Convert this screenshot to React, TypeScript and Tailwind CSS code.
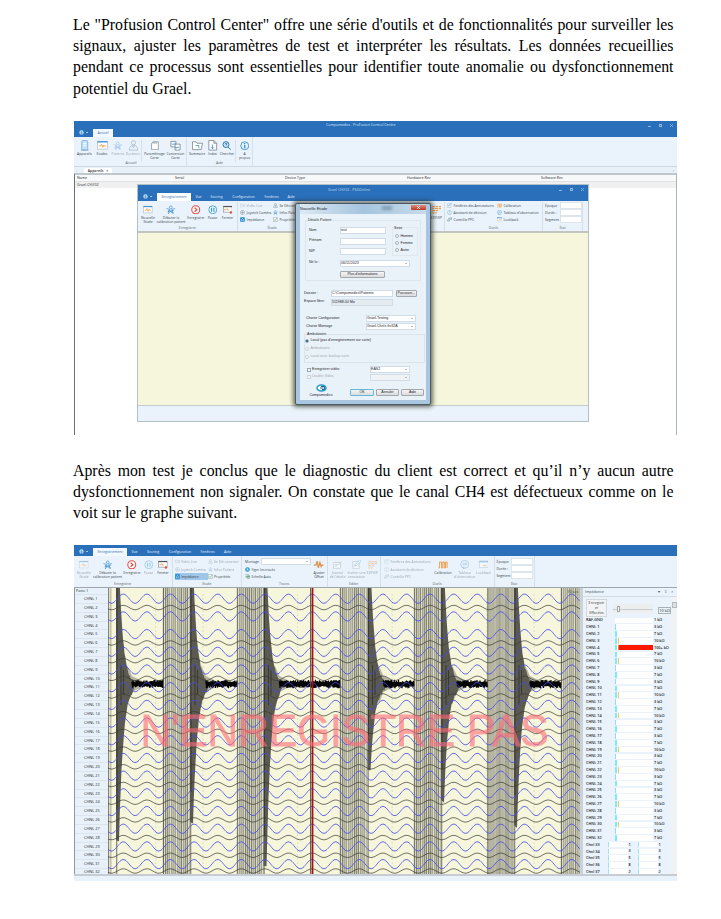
import React from "react";

type IconName =
  | "server" | "wave" | "people" | "person" | "card" | "swap" | "folder" | "page" | "search"
  | "info" | "record" | "pause" | "close" | "camera" | "joystick" | "imped" | "prop" | "figer"
  | "scale" | "offset" | "note" | "journal" | "edf" | "help" | "tool" | "calib" | "table" | "look";

const B = "#4793d1";
const O = "#f0a050";
const G = "#7d8790";

const glyphs: Record<IconName, React.ReactNode> = {
  server: <g><rect x="6" y="1" width="13" height="21" rx="3" fill="#c5e2f7" stroke="#7fb3dc" strokeWidth="2" /><path d="M9 8h7M9 12h7" stroke="#fff" strokeWidth="2" /><path d="M4 22h17" stroke="#7fa9c9" strokeWidth="2" /></g>,
  wave: <g><rect x="1" y="3" width="22" height="17" fill="#fff" stroke="#a9b9c6" strokeWidth="1.5" /><path d="M1 4h22" stroke={B} strokeWidth="3" /><path d="M4 13h4l2-4 3 7 2-5 1 2h4" fill="none" stroke={O} strokeWidth="2" /></g>,
  people: <g fill="none" stroke={B} strokeWidth="1.8"><circle cx="12" cy="6" r="3.5" /><path d="M1 9l8 2-3 11 6-6 6 6-3-11 8-2M4 17l16-4M5 13l14 6" /></g>,
  person: <g fill="none" stroke="#5f7d95" strokeWidth="1.8"><circle cx="12" cy="6" r="4.5" /><path d="M3 22c0-8 4-10 9-10s9 2 9 10zM9 12l3 5 3-5" /></g>,
  card: <g fill="#fff" stroke={G} strokeWidth="1.8"><path d="M4 6l4-4h13v20H4zM8 2v5M12 2v5M16 2v5" /></g>,
  swap: <g fill="#fff" stroke={G} strokeWidth="1.8"><path d="M2 3h11v12H2z" /><path d="M11 9h11v13H11z" /><path d="M4 9h9l-3-3M20 16h-9l3 3" fill="none" stroke={B} /></g>,
  folder: <g fill="#fff" stroke={G} strokeWidth="1.8"><path d="M1 21V4h8l2 3h12l-3 14z" /><path d="M8 12h7v6" fill="none" stroke={B} /></g>,
  page: <g fill="#fff" stroke={G} strokeWidth="1.8"><path d="M4 1h11l6 6v15H4zM15 1v6h6" /><path d="M12 10v9M9 16l3 3 3-3" stroke={B} /></g>,
  search: <g fill="#c9e7fb" stroke="#276eaa" strokeWidth="2.3"><circle cx="10" cy="9" r="7.5" /><path d="M15 15l7 7" /><path d="M8 8q2-5 4-1l-2 4" fill="none" /></g>,
  info: <g fill="none" stroke="#2583c9" strokeWidth="2"><circle cx="12" cy="12" r="10" /><path d="M12 10v8M12 5v3" strokeWidth="3" /></g>,
  record: <g fill="#fff" stroke="#e04a40" strokeWidth="2.6"><circle cx="12" cy="12" r="10" /><path d="M9 7l6 5-6 5" fill="none" strokeWidth="3" /></g>,
  pause: <g fill="#eef8ff" stroke="#3f9bd8" strokeWidth="2.2"><circle cx="12" cy="12" r="10" /><path d="M9 7v10M15 7v10" strokeWidth="3" /></g>,
  close: <g><rect x="1" y="3" width="22" height="15" fill="#fff" stroke={G} strokeWidth="1.5" /><path d="M1 4h22" stroke="#555" strokeWidth="3" /><path d="M3 12h5l2-3 3 5 2-3" fill="none" stroke={O} strokeWidth="2" /><circle cx="20" cy="19" r="3" fill="#e24d42" /></g>,
  camera: <g fill="none" stroke={G} strokeWidth="2"><path d="M1 6h15v12H1zM16 11l7-4v11l-7-4" /></g>,
  joystick: <g fill="none" stroke="#667a88" strokeWidth="2"><circle cx="12" cy="12" r="10" /><path d="M12 5v14M5 12h14" /></g>,
  imped: <g><rect x="1" y="1" width="22" height="22" rx="3" fill="#1787cf" /><path d="M6 18h4c-5-6-2-11 2-11s7 5 2 11h4" fill="none" stroke="#fff" strokeWidth="2.5" /></g>,
  prop: <g fill="#fff" stroke={G} strokeWidth="2"><path d="M2 2h19v20H2z" /><path d="M6 12l4 5 8-11" fill="none" stroke="#39a06b" strokeWidth="3" /></g>,
  figer: <g><circle cx="12" cy="12" r="11" fill="#2b93d1" /><path d="M6 13l12-3M12 5v13M7 7l10 10" stroke="#fff" strokeWidth="2" /></g>,
  scale: <g fill="none" stroke="#45916d" strokeWidth="2.5"><path d="M2 4h18v9H2M9 10h12v11H9" /><path d="M4 18l6-7 4 6 6-6" /></g>,
  offset: <path d="M0 13h5l3-10 3 17 4-14 3 11 2-4h4" fill="none" stroke="#df8b3c" strokeWidth="2.8" />,
  note: <g fill="#fff" stroke="#87a5b9" strokeWidth="2"><path d="M2 4h16v18H2z" /><path d="M6 15l2-4L19 0l4 3-11 11z" stroke={B} /></g>,
  journal: <g fill="#fff" stroke="#95a7b3" strokeWidth="2"><path d="M1 6h18v15H1zM4 11h10M4 15h7" /><path d="M13 13L22 3" /></g>,
  edf: <g stroke={O} strokeWidth="3"><path d="M1 4h6M9 4h6M17 4h6M1 9h5M8 9h7M17 9h6M1 14h7M10 14h5M1 20h5M8 20h4" /></g>,
  help: <g fill="none" stroke="#6aa4d2" strokeWidth="2"><circle cx="12" cy="12" r="10" /><path d="M9 8q5-4 5 1l-2 4v4" /></g>,
  tool: <g fill="none" stroke="#628f8d" strokeWidth="3"><path d="M2 18l8-13 7 4-7 11zM15 4h7v9" /></g>,
  calib: <path d="M1 20h3V5h5v15h3V5h4v15h3V5h4v15" fill="none" stroke={O} strokeWidth="2.5" />,
  table: <g fill="#fff" stroke={B} strokeWidth="2"><circle cx="12" cy="11" r="10" /><path d="M6 8h12M6 12h12M9 16v7l5-6" /></g>,
  look: <g><rect x="1" y="3" width="22" height="16" fill="#fff" stroke="#8aa7bd" strokeWidth="1.5" /><path d="M1 4h22" stroke={B} strokeWidth="4" /><path d="M10 14h9" stroke={O} strokeWidth="3" /></g>,
};

function Icon({ name, size = 10 }: { name: IconName; size?: number }) {
  return <svg viewBox="0 0 24 24" width={size} height={size} className="shrink-0">{glyphs[name]}</svg>;
}

function Big({ w, icon, lines, dim, size }: { w: number; icon: IconName; lines: string[]; dim?: boolean; size?: number }) {
  return (
    <div className={`flex shrink-0 flex-col items-center ${dim ? "opacity-45" : ""}`} style={{ width: w }}>
      <div className="flex h-[11px] items-center"><Icon name={icon} size={size ?? 9.5} /></div>
      <div className="mt-px flex flex-col items-center">
        {lines.map((l) => <span key={l} className="leading-[4.2px] whitespace-nowrap">{l}</span>)}
      </div>
    </div>
  );
}

type SmallItem = { icon?: IconName; text: string; dim?: boolean; on?: boolean };

function Small({ w, items, pitch }: { w: number; items: SmallItem[]; pitch: number }) {
  return (
    <div className="flex shrink-0 flex-col" style={{ width: w }}>
      {items.map((i) => (
        <div key={i.text} className={`flex items-center gap-[1.5px] whitespace-nowrap ${i.on ? "bg-[#9fc5e7]" : ""} ${i.dim ? "opacity-45" : ""}`} style={{ height: pitch }}>
          {i.icon && <Icon name={i.icon} size={5} />}<span>{i.text}</span>
        </div>
      ))}
    </div>
  );
}

function Group({ w, label, children, pl = 0 }: { w: number; label: string; children?: React.ReactNode; pl?: number }) {
  return (
    <div className="flex h-full shrink-0 flex-col overflow-hidden border-r border-[#d4dfe9]" style={{ width: w }}>
      <div className="flex min-h-0 flex-1" style={{ paddingLeft: pl }}>{children}</div>
      <div className="h-[6px] text-center leading-[5px] text-[#5a656f]">{label}</div>
    </div>
  );
}

function StateFields({ pitch }: { pitch: number }) {
  return (
    <div className="flex flex-1 flex-col">
      {["Époque", "Durée :", "Segment"].map((t) => (
        <div key={t} className="flex items-center" style={{ height: pitch }}>
          <span className="w-[14.5px]">{t}</span><span className="h-[7px] w-[22px] border border-[#dde5ec] bg-white" />
        </div>
      ))}
    </div>
  );
}

function AppMenu() {
  return (
    <div className="flex w-[19px] items-center justify-center gap-[2px] pb-px">
      <svg width="5" height="5" viewBox="0 0 10 10"><circle cx="5" cy="5" r="4.5" fill="#b9dcf5" /><path d="M1 6h8M5 2v8" stroke="#3a83c6" /></svg>
      <span className="h-px w-[2px] bg-[#9cc4e8]" />
    </div>
  );
}

function TabRow({ gaps, light }: { gaps: number[]; light?: boolean }) {
  const tabs = ["Vue", "Scoring", "Configuration", "Fenêtres", "Aide"];
  return (
    <div className="flex h-[8px] text-[3.5px] leading-[8px] text-[#e3f0fb]">
      <AppMenu />
      <div className={`w-[34px] text-center text-[#2a6db5] ${light ? "bg-[#f2f8fd]" : "bg-white"}`}>Enregistrement</div>
      {tabs.map((t, i) => <div key={t} className="text-center" style={{ width: gaps[i] }}>{t}</div>)}
    </div>
  );
}

function WinButtons({ gap }: { gap: number }) {
  return (
    <div className="flex items-center text-[#8fb7df]" style={{ gap }}>
      <span className="mt-[2px] h-px w-[3px] bg-current" />
      <span className="size-[3px] border border-current" />
      <svg width="3" height="3" viewBox="0 0 6 6"><path d="M0 0l6 6M6 0L0 6" stroke="currentColor" strokeWidth="1.5" /></svg>
    </div>
  );
}

function Field({ w, children, grey, arrow, disabled }: { w: number; children?: React.ReactNode; grey?: boolean; arrow?: boolean; disabled?: boolean }) {
  return (
    <div className={`flex h-[7px] shrink-0 items-center justify-between border border-[#d0dde8] leading-[5px] whitespace-nowrap ${grey ? "bg-[#e4ebf1]" : disabled ? "bg-[#f0f3f5]" : "bg-white"}`} style={{ width: w }}>
      <span>{children}</span>{arrow && <span className="mr-[2px] size-0 border-x-[1px] border-t-[1px] border-x-transparent border-t-[#777]" />}
    </div>
  );
}

function Btn({ w, children, main }: { w: number; children: React.ReactNode; main?: boolean }) {
  return (
    <div className={`h-[7px] shrink-0 rounded-[1px] border bg-linear-to-b from-[#f5f5f5] to-[#d9dbdd] text-center leading-[5px] whitespace-nowrap ${main ? "border-[#62b9d9]" : "border-[#a2a8ad]"}`} style={{ width: w }}>{children}</div>
  );
}

function Radio({ label, on, dim }: { label: string; on?: boolean; dim?: boolean }) {
  return (
    <div className={`flex items-center gap-[1.5px] whitespace-nowrap ${dim ? "text-[#a3a9ae]" : ""}`}>
      <span className={`size-[4px] shrink-0 rounded-full border ${dim ? "border-[#ccd3d9]" : "border-[#aab4bd]"} ${on ? "bg-[#14608f]" : "bg-[#f5f7f8]"}`} />{label}
    </div>
  );
}

function Row({ h, children, pl = 0 }: { h: number; children: React.ReactNode; pl?: number }) {
  return <div className="flex shrink-0 items-center whitespace-nowrap" style={{ height: h, paddingLeft: pl }}>{children}</div>;
}

function Dialog() {
  return (
    <div className="absolute top-[82px] left-[221px] flex h-[202px] w-[136px] flex-col rounded-[2px] border border-[#4c5a64] bg-[#a8c6df] px-[4px] pb-[4px] font-['Liberation_Sans',sans-serif] text-[3.6px] text-[#1d252c] shadow-[0_0_4px_2px_rgba(35,40,25,0.65)]">
      <div className="flex h-[10px] items-center justify-between bg-linear-to-r from-[#dce9f3] via-[#a5c4df] to-[#c6dbea] text-[4px]">
        <span className="text-[#1c2630]">Nouvelle Etude</span>
        <span className="mb-[2px] ml-[35px] h-[4px] w-[10px] bg-[#7f9cb3] blur-[1.5px]" />
        <span className="mb-[3px] flex h-[5px] w-[15px] items-center justify-center rounded-b-[1px] bg-linear-to-b from-[#dd8f83] to-[#b8301d]">
          <svg width="3" height="3" viewBox="0 0 6 6"><path d="M0 0l6 6M6 0L0 6" stroke="#fff" strokeWidth="1.5" /></svg>
        </span>
      </div>
      <div className="flex flex-1 flex-col bg-[#eaf2f9] px-px pt-px">
        <div className="mt-[5px] ml-[4px] h-[61px] w-[116px] shrink-0 border border-[#dde6ed]">
          <div className="-mt-[3px] ml-[2px] w-[24px] bg-[#eaf2f9] leading-[5px] whitespace-nowrap">Détails Patient</div>
          <div className="flex pt-[2px]">
            <div className="w-[86px] pl-[3px]">
              {[["Nom", "test"], ["Prénom", ""], ["NIP", ""]].map(([l, v]) => (
                <Row key={l} h={10.7}><span className="w-[31px]">{l}</span><Field w={46}>{v}</Field></Row>
              ))}
            </div>
            <div className="mt-[2px] flex h-[29px] w-[26px] flex-col gap-[2.8px] border border-[#e0e8ee] pl-[2px]">
              <span className="-mt-[2px] -ml-px leading-[5px]">Sexe</span>
              {["Homme", "Femme", "Autre"].map((t) => <div key={t} className="leading-[4.3px]"><Radio label={t} /></div>)}
            </div>
          </div>
          <Row h={12} pl={3}><span className="w-[31px]">Né le :</span><Field w={70} arrow>06/11/2023</Field></Row>
          <Row h={10} pl={34}><Btn w={45}>Plus d'informations</Btn></Row>
        </div>
        <div className="h-[8.5px] shrink-0" />
        <Row h={8} pl={3}><span className="w-[27px]">Dossier :</span><Field w={62}>C:\Compumedics\Patients</Field><span className="w-[3px]" /><Btn w={20.5}>Parcourir...</Btn></Row>
        <Row h={9} pl={3}><span className="w-[27px]">Espace libre:</span><Field w={62} grey>511988.00 Mo</Field></Row>
        <div className="h-[8px] shrink-0" />
        <Row h={8} pl={5}><span className="w-[60px]">Choisir Configuration</span><Field w={50} arrow>Grael-Testing</Field></Row>
        <Row h={7.5} pl={5}><span className="w-[60px]">Choisir Montage</span><Field w={50} arrow>Grael-Chnls thr32A</Field></Row>
        <div className="mt-[4px] ml-[3px] h-[29px] w-[121px] shrink-0 border border-[#dbe4eb]">
          <div className="-mt-[3px] ml-[2px] w-[19px] bg-[#eaf2f9] leading-[5px]">Ambulatoire</div>
          <Row h={8}><Radio label="Local (pas d'enregistrement sur carte)" on /></Row>
          <Row h={7.8}><Radio label="Ambulatoire" dim /></Row>
          <Row h={7.8}><Radio label="Local avec backup carte" dim /></Row>
        </div>
        <div className="h-[2.5px] shrink-0" />
        <Row h={8} pl={6}><span className="mr-px size-[4px] border border-[#9aa6b0] bg-white" /><span className="w-[58px]">Enregistrer vidéo</span><Field w={40} arrow>EAS2</Field></Row>
        <Row h={7} pl={6}><span className="mr-px size-[4px] border border-[#ccd3d8] bg-white" /><span className="w-[58px] text-[#a7adb1]">Double Vidéo</span><Field w={40} arrow disabled /></Row>
        <div className="flex pl-[7px]">
          <div className="flex w-[26px] flex-col items-center pt-[3px]">
            <svg width="11" height="8" viewBox="0 0 22 16"><ellipse cx="11" cy="8" rx="9" ry="6" fill="#fff" stroke="#239bc7" strokeWidth="3" /><path d="M8 8h7M10 5h7v6h-5" stroke="#246989" strokeWidth="2" fill="none" /></svg>
            <span className="mt-[1px] leading-[4px]">Compumedics</span>
          </div>
          <div className="ml-[16px] flex gap-[2px] pt-[8px]"><Btn w={24} main>OK</Btn><Btn w={23}>Annuler</Btn><Btn w={23}>Aide</Btn></div>
        </div>
      </div>
    </div>
  );
}

function OnlineWindow() {
  return (
    <div className="absolute top-[63px] left-[63px] flex h-[238px] w-[452px] flex-col border border-[#b3c0ca] bg-[#eaf3fb]">
      <div className="flex h-[16px] flex-col justify-between bg-[#2a6fb9]">
        <div className="flex h-[8px] items-center pt-px text-[3.6px] text-[#c6dcf2]">
          <span className="ml-[190px]">Grael CH#02 - PSGOnline</span>
          <div className="ml-auto pr-[4px]"><WinButtons gap={8} /></div>
        </div>
        <TabRow gaps={[15, 21, 33, 23, 16]} />
      </div>
      <div className="flex h-[30px] bg-[#eaf3fb] pt-px text-[3.4px] text-[#36404a]">
        <Group w={100} label="Enregistrer">
          <div className="flex pt-[2px]">
            <Big w={20} icon="wave" lines={["Nouvelle", "Etude"]} />
            <Big w={26} icon="people" lines={["Débuter la", "calibration patient"]} />
            <Big w={24} icon="record" lines={["Enregistrer"]} />
            <Big w={9} icon="pause" lines={["Pause"]} />
            <Big w={21} icon="close" lines={["Fermer"]} />
          </div>
        </Group>
        <Group w={69} label="Étude" pl={2}>
          <Small w={33} pitch={7} items={[{ icon: "camera", text: "Vidéo Live", dim: true }, { icon: "joystick", text: "Joystick Caméra" }, { icon: "imped", text: "Impédance" }]} />
          <Small w={34} pitch={7} items={[{ icon: "person", text: "Se Déconnecter" }, { icon: "people", text: "Infos Patient" }, { icon: "prop", text: "Propriétés" }]} />
        </Group>
        <Group w={138} label="" pl={121}><div className="pt-[2px]"><Big w={17} icon="edf" lines={["EDF/EP"]} /></div></Group>
        <Group w={98} label="Outils" pl={2}>
          <Small w={50} pitch={7} items={[{ icon: "note", text: "Fenêtres des Annotations" }, { icon: "help", text: "Assistant de décision" }, { icon: "tool", text: "Contrôle PPC" }]} />
          <Small w={46} pitch={7} items={[{ icon: "calib", text: "Calibration" }, { icon: "table", text: "Tableau d'observation" }, { icon: "look", text: "Lookback" }]} />
        </Group>
        <Group w={40} label="État" pl={2}><StateFields pitch={7} /></Group>
      </div>
      <div className="h-[175px] border-t-2 border-b border-t-[#c3c6c0] border-b-[#c4ccd1] bg-[#f5f6dc]" />
    </div>
  );
}

function ControlCentre() {
  return (
    <div className="relative ml-[1px] flex h-[314px] w-[603px] flex-col bg-white">
      <div className="flex h-[16px] flex-col justify-between bg-[#2a6fb9]">
        <div className="flex h-[8px] items-center text-[3.6px] text-[#dceaf8]">
          <span className="ml-[252px]">Compumedics - ProFusion Control Centre</span>
          <div className="ml-auto pr-[4px]"><WinButtons gap={8} /></div>
        </div>
        <div className="flex h-[8px] text-[3.4px] leading-[8px]"><AppMenu /><div className="w-[20px] bg-[#f2f8fd] text-center text-[#2a6db5]">Accueil</div></div>
      </div>
      <div className="flex h-[30px] shrink-0 border-b border-[#ccd6df] bg-[#eaf3fb] pl-[2px] text-[3.4px] text-[#36404a]">
        <Group w={111} label="Accueil">
          <div className="flex pt-[3px]">
            <Big w={17} icon="server" size={11} lines={["Appareils"]} />
            <Big w={18} icon="wave" size={11} lines={["Etudes"]} />
            <Big w={14} icon="people" dim lines={["Patients"]} />
            <Big w={16} icon="person" size={11} dim lines={["Docteurs"]} />
            <div className="mr-[2px] h-[22px] w-px bg-[#d4dfe9]" />
            <Big w={21} icon="card" lines={["Paramétrage", "Carte"]} />
            <Big w={21} icon="swap" size={11} lines={["Conversion", "Carte"]} />
          </div>
        </Group>
        <Group w={66} label="Aide" pl={1}>
          <div className="flex pt-[3px]">
            <Big w={18} icon="folder" size={11} lines={["Sommaire"]} />
            <Big w={13} icon="page" size={11} lines={["Index"]} />
            <Big w={16} icon="search" lines={["Chercher"]} />
            <div className="mr-[2px] h-[22px] w-px bg-[#d4dfe9]" />
            <Big w={13} icon="info" lines={["A", "propos"]} />
          </div>
        </Group>
      </div>
      <div className="flex h-[6px] shrink-0 items-center bg-[#e9f1f8] text-[3.5px] leading-[5px] text-[#303840]">
        <span className="w-[10px] pl-[2px] text-[#90979d]">‹</span>
        <div className="w-[28px] rounded-t-[1px] bg-white text-center font-semibold">Appareils&nbsp;&nbsp; ×</div>
        <span className="ml-auto pr-[3px]">›</span>
      </div>
      <div className="flex flex-1 flex-col border-t-2 border-r border-l border-t-[#bec6ce] border-r-[#abb4bc] border-l-[#6a7077] text-[3.6px] text-[#22282e]">
        <div className="flex h-[7px] items-center border-b border-[#dfe2e4] bg-[#f8f9fa]">
          <span className="w-[100px] pl-[2px]">Name</span><span className="w-[110px]">Serial</span><span className="w-[122px]">Device Type</span><span className="w-[134px]">Hardware Rev</span><span>Software Rev</span>
        </div>
        <div className="flex h-[6px] items-center bg-[#f0f0f0] pl-[2px]"><span>Grael-CH#02</span></div>
      </div>
      <OnlineWindow />
      <Dialog />
    </div>
  );
}

/* Signal geometry, in page pixels. */
const chanY = (n: number) => (n === 32 ? 871 : 598.7 + (n - 1) * 8.847);
const noise = (i: number) => { const v = Math.sin(i * 127.1 + 311.7) * 43758.5453; return v - Math.floor(v); };

function sine(n: number) {
  const amp = n % 2 ? 4.6 : 2.2;
  let d = "";
  for (let x = 108; x <= 580; x += 1) {
    const y = chanY(n) - amp * Math.cos(((x - 123.3) / 23.6) * Math.PI * 2);
    d += `${x === 108 ? "M" : "L"}${x} ${y.toFixed(1)}`;
  }
  return d;
}

const bands = [[108, 111.5], [163, 190], [237, 264], [340, 367.5], [414, 441], [487.5, 514], [561, 580]];
const wedges = [
  { x: 116, bottom: 840, end: 163 }, { x: 190, bottom: 822, end: 237 }, { x: 263.5, bottom: 866, end: 340 },
  { x: 367.5, bottom: 770, end: 414 }, { x: 441, bottom: 800, end: 487.5 }, { x: 514, bottom: 825, end: 561 },
];

/* Upper edge decays towards the flat line; lower edge mirrors it down to `bottom`. */
function wedgePath(x: number, bottom: number) {
  let d = `M${x} 588L${x + 4} 588`;
  for (let i = 0; i <= 18; i += 1) {
    const px = x + 4 + i * 0.75;
    d += `L${px} ${(683 - 95 * Math.exp(-i / 6.5) * (1 - i / 40) + noise(i + x) * 3).toFixed(1)}`;
  }
  d += `L${x + 19} 685`;
  for (let i = 16; i >= 0; i -= 1) {
    d += `L${(x + 3 + i * 0.85).toFixed(1)} ${(686 + (bottom - 686) * Math.exp(-i / 4.8) + noise(i * 3 + x) * 3).toFixed(1)}`;
  }
  return `${d}L${x} ${bottom}Z`;
}

function flatNoise(x0: number, x1: number) {
  let d = `M${x0} 684`;
  let i = 0;
  for (let x = x0; x <= x1; x += 0.5) { i += 1; d += `L${x} ${(684 + (i % 2 ? -1 : 1) * (1.8 + noise(i + x0) * 2.4)).toFixed(1)}`; }
  return d;
}

function Signals() {
  const chans = Array.from({ length: 32 }, (_, i) => i + 1).filter((n) => n !== 4);
  return (
    <svg width="472" height="286" viewBox="108 588 472 286" className="shrink-0 bg-[#f6f6dc]">
      {Array.from({ length: 10 }, (_, i) => <path key={i} d={`M${155.7 + i * 47.3} 594V874`} stroke="#cfdcbd" strokeWidth="0.8" strokeDasharray="2 2" />)}
      {bands.map(([a, b]) => (
        <g key={a}>
          <rect x={a} y="588" width={b - a} height="286" fill="#bdbda8" />
          {Array.from({ length: Math.floor((b - a) / 3) }, (_, i) => (
            <path key={i} d={`M${a + 1.5 + i * 3} 588V874`} strokeWidth={0.6 + noise(i * 11 + a)} stroke="#deddc6" />
          ))}
          {Array.from({ length: Math.floor((b - a) / 2) }, (_, i) => (
            <path key={i} d={`M${a + 0.5 + i * 2} 588V874`} strokeWidth="0.7" stroke={noise(i * 7 + a) > 0.6 ? "#6c6c60" : "#9a9a8a"} />
          ))}
        </g>
      ))}
      {wedges.map((w) => (
        <g key={w.x}>
          <rect x={w.x} y={w.bottom - 20} width="1.3" height={874 - w.bottom + 20} fill="#8d8d7e" />
          <path d={`M${w.x + 11} 665L${w.x + 16} 676L${w.x + 26} 681V687L${w.x + 16} 692L${w.x + 11} 705Z`} fill="#55544a" opacity="0.4" />
          <path d={wedgePath(w.x, w.bottom)} fill="#5b5a50" />
          <path d={`M${w.x + 1} 588V${w.bottom - 30}M${w.x + 5} 665V705M${w.x + 7.5} 670V695`} stroke="#2b2b26" strokeWidth="0.7" />
          <path d={flatNoise(w.x + 16, w.end)} fill="none" stroke="#050505" strokeWidth="1.2" />
          <path d={`M${w.end + 0.3} 588V874`} stroke="#4c4c43" strokeWidth="0.8" opacity="0.75" />
        </g>
      ))}
      {chans.map((n) => <path key={n} d={sine(n)} fill="none" stroke={n % 2 ? "#4747ea" : "#3b3b35"} strokeWidth={n % 2 ? 0.8 : 0.7} />)}
      <path d="M310.6 588V874" stroke="#5c5245" strokeWidth="1" />
      <path d="M312.5 588V874" stroke="#a31217" strokeWidth="1.8" />
      <text x="140.5" y="746" fontSize="45" fill="#ff6b78" stroke="#ff6b78" strokeWidth="0.9" opacity="0.6" textLength="408" lengthAdjust="spacingAndGlyphs" fontFamily="Liberation Sans, Arial, sans-serif">N'ENREGISTRE PAS</text>
      <text x="567" y="593" fontSize="4" fill="#2c4930" fontFamily="Open Sans, sans-serif">10 sec</text>
    </svg>
  );
}

const levels = [1, 3, 7, 10, 100, 7, 10, 3, 7, 3, 7, 10, 3, 7, 10, 3, 7, 3, 7, 10, 3, 7, 10, 3, 7, 3, 7, 10, 3, 7, 10, 3, 7];
const extra = [[33, 1, 1], [34, 3, 3], [35, 5, 5], [36, 8, 8], [37, 2, 2]];

function Impedance() {
  return (
    <div className="flex w-[97px] flex-col border-l-[3px] border-[#c9d2da] bg-[#eaf3fb] text-[3.8px] text-[#14181c]">
      <div className="flex h-[8px] shrink-0 items-center justify-between px-[2px] text-[3.6px] text-[#3c4955]"><span>Impédance</span><span className="tracking-[1.6px] whitespace-pre">▾ ⇩ ×</span></div>
      <div className="flex h-[278px] shrink-0 border-t border-[#d4dde5]">
        <div className="flex w-[88px] flex-col pl-[3px]">
          <div className="flex h-[20px] shrink-0 items-center pt-[2px] text-[3.8px]">
            <div className="h-[18px] w-[21px] border border-[#d3d8dc] bg-[#f1f3f4] text-center leading-[5.2px] text-[#444]">Enregistr<br />er<br />Effacées</div>
            <div className="relative ml-[6px] h-[9px] w-[40px] bg-[#eceeef]">
              <div className="mt-[5px] h-px w-full bg-[#c9cdd0]" />
              <div className="absolute top-[2px] left-[4px] h-[6px] w-[3px] border border-[#a0a5a9] bg-[#f7f7f7]" />
            </div>
            <div className="mt-[4px] ml-[5px] h-[7px] w-[13px] shrink-0 border border-[#a9b1b8] text-center leading-[5px] whitespace-nowrap">10 kΩ</div>
          </div>
          {levels.map((v, i) => (
            <div key={i} className="flex h-[6.8px] shrink-0 items-center leading-[6px] font-semibold whitespace-nowrap">
              <span className="w-[28.5px]">{i === 0 ? "RAF-GND" : `CHNL ${i}`}</span>
              <span className="flex h-[5.6px] w-[38px] bg-white">
                {v > 1 && <span className={v === 3 ? "w-px bg-[#91dcfa]" : "w-[2px] bg-[#7cebf5]"} />}
                {v === 10 && <span className="ml-px w-[1.2px] bg-[#f5c65b]" />}
                {v === 100 && <><span className="ml-px w-px bg-[#ff7a20]" /><span className="flex-1 bg-[#ff1800]" /></>}
              </span>
              <span className="pl-[1.5px]">{v === 100 ? "100+ kΩ" : `${v} kΩ`}</span>
            </div>
          ))}
          {extra.map(([n, a, b]) => (
            <div key={n} className="flex h-[6.8px] shrink-0 items-center font-semibold">
              <span className="w-[21.5px]">Chnl {n}</span>
              <span className="h-[5.6px] w-[20px] border-l border-[#9be5f5] bg-white" /><span className="w-[10px] pl-px leading-[6px]">{a}</span>
              <span className="h-[5.6px] w-[20px] border-l border-[#9be5f5] bg-white" /><span className="pl-px leading-[6px]">{b}</span>
            </div>
          ))}
        </div>
        <div className="flex flex-1 flex-col items-center bg-[#f1f2f3] pt-[5px]"><span className="h-[6px] w-[5px] border border-[#b5babf] bg-[#dedfe1]" /></div>
      </div>
    </div>
  );
}

function Recording() {
  return (
    <div className="ml-[1px] flex h-[336px] w-[603px] flex-col bg-[#e8f2fb]">
      <div className="h-[11px] bg-[#2a6fb9] pt-[3px]"><TabRow gaps={[15, 22, 32, 23, 17]} light /></div>
      <div className="flex h-[31px] shrink-0 bg-[#eaf3fb] text-[3.4px] text-[#36404a]">
        <Group w={98.5} label="Enregistrer">
          <div className="flex pt-[3px]">
            <Big w={20} icon="wave" dim lines={["Nouvelle", "Etude"]} />
            <Big w={27} icon="people" lines={["Débuter la", "calibration patient"]} />
            <Big w={22} icon="record" lines={["Enregistrer"]} />
            <Big w={11} icon="pause" dim lines={["Pause"]} />
            <Big w={18} icon="close" lines={["Fermer"]} />
          </div>
        </Group>
        <Group w={69.5} label="Étude" pl={2}>
          <div className="flex pt-[2px]">
            <Small w={33} pitch={7.4} items={[{ icon: "camera", text: "Vidéo Live", dim: true }, { icon: "joystick", text: "Joystick Caméra", dim: true }, { icon: "imped", text: "Impédance", on: true }]} />
            <Small w={34} pitch={7.4} items={[{ icon: "person", text: "Se Déconnecter", dim: true }, { icon: "people", text: "Infos Patient", dim: true }, { icon: "prop", text: "Propriétés" }]} />
          </div>
        </Group>
        <Group w={85.5} label="Traces" pl={3}>
          <div className="flex w-[66px] flex-col pt-[2px]">
            <div className="flex h-[7.4px] items-center"><span className="w-[16px]">Montage</span><Field w={50} arrow /></div>
            <Small w={40} pitch={7.4} items={[{ icon: "figer", text: "Figer les tracés" }, { icon: "scale", text: "Echelle Auto" }]} />
          </div>
          <div className="pt-[3px]"><Big w={16} icon="offset" lines={["Ajuster", "Offset"]} /></div>
        </Group>
        <Group w={53.5} label="Editer">
          <div className="flex pt-[3px]">
            <Big w={20} icon="journal" dim lines={["Journal", "de l'étude"]} />
            <Big w={18} icon="note" dim lines={["Insérer une", "annotation"]} />
            <Big w={14} icon="edf" dim lines={["EDF/EP"]} />
          </div>
        </Group>
        <Group w={113.5} label="Outils" pl={3}>
          <div className="w-[46px] pt-[2px]"><Small w={46} pitch={7.4} items={[{ icon: "note", text: "Fenêtres des Annotations", dim: true }, { icon: "help", text: "Assistant de décision", dim: true }, { icon: "tool", text: "Contrôle PPC", dim: true }]} /></div>
          <div className="flex pt-[3px]">
            <Big w={26} icon="calib" lines={["Calibration"]} />
            <Big w={17} icon="table" dim lines={["Tableau", "d'observation"]} />
            <Big w={21} icon="look" dim lines={["Lookback"]} />
          </div>
        </Group>
        <Group w={40} label="État" pl={2}><div className="pt-[2px]"><StateFields pitch={7.2} /></div></Group>
      </div>
      <div className="flex h-[287px] shrink-0 border-t border-[#9ea6ac]">
        <div className="flex w-[34px] flex-col overflow-hidden border-l border-[#8e989f] bg-[#e8f1f9] text-[3.9px] text-[#20272e]">
          <div className="h-[6px] shrink-0 pl-px leading-[6px]">Pane 1</div>
          {Array.from({ length: 32 }, (_, i) => (
            <div key={i} className={`shrink-0 border-t border-[#dce5ed] pl-[9px] whitespace-nowrap ${i === 31 ? "h-[6px] leading-[5px]" : "h-[8.847px] leading-[7.8px]"}`}>CHNL {i + 1}</div>
          ))}
        </div>
        <Signals />
        <Impedance />
      </div>
      <div className="flex-1 border-t-2 border-[#c6ccd1]" />
    </div>
  );
}

function Line({ children, last }: { children: string; last?: boolean }) {
  return <div className={`h-[21.2px] leading-[21.2px] whitespace-nowrap ${last ? "" : "[text-align-last:justify]"}`}>{children}</div>;
}

export default function App() {
  return (
    <main className="h-[919px] w-[721px] overflow-hidden bg-white pt-[14px] pl-[73px] font-['Open_Sans','Noto_Sans',sans-serif]">
      <section className="h-[107px] w-[600.5px] font-['Liberation_Serif',serif] text-[15.85px] text-black">
        <Line>Le "Profusion Control Center" offre une série d'outils et de fonctionnalités pour surveiller les</Line>
        <Line>signaux, ajuster les paramètres de test et interpréter les résultats. Les données recueillies</Line>
        <Line>pendant ce processus sont essentielles pour identifier toute anomalie ou dysfonctionnement</Line>
        <Line last>potentiel du Grael.</Line>
      </section>
      <ControlCentre />
      <section className="h-[110px] w-[600.5px] pt-[25px] font-['Liberation_Serif',serif] text-[15.85px] text-black">
        <Line>Après mon test je conclus que le diagnostic du client est correct et qu’il n’y aucun autre</Line>
        <Line>dysfonctionnement non signaler. On constate que le canal CH4 est défectueux comme on le</Line>
        <Line last>voit sur le graphe suivant.</Line>
      </section>
      <Recording />
    </main>
  );
}
